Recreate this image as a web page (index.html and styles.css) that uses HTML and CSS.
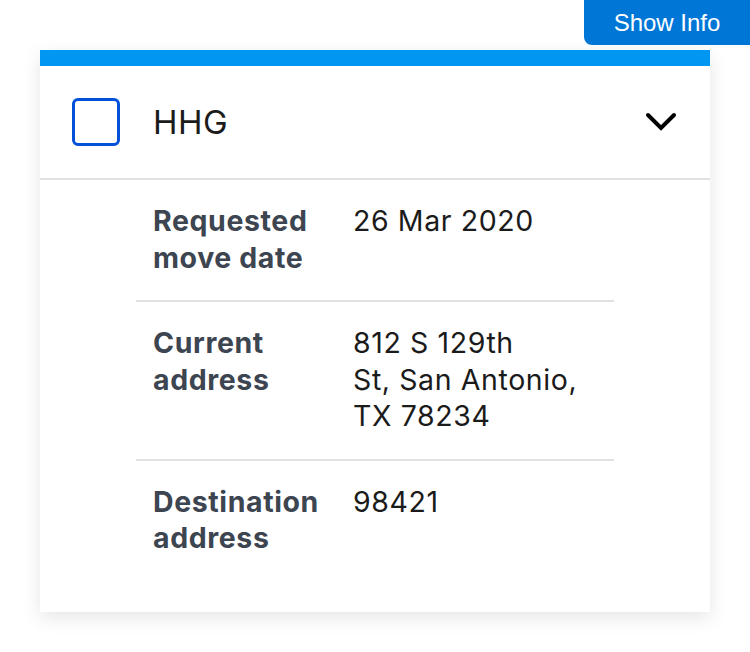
FILE: index.html
```html
<!DOCTYPE html>
<html lang="en">
<head>
<meta charset="utf-8">
<title>HHG</title>
<link rel="stylesheet" href="styles.css">
</head>
<body>
<button class="show-info" type="button">Show Info</button>
<main class="page">
  <section class="card">
    <div class="card-top"></div>
    <header class="card-header">
      <span class="checkbox" aria-hidden="true"></span>
      <h2 class="card-title">HHG</h2>
      <svg class="chevron" viewBox="0 0 32 20" width="32" height="20" aria-hidden="true">
        <path d="M3 3 L16 16 L29 3" fill="none" stroke="#000" stroke-width="4" stroke-linecap="round" stroke-linejoin="miter"/>
      </svg>
    </header>
    <dl class="details">
      <div class="row">
        <dt class="label">Requested move date</dt>
        <dd class="value">26 Mar 2020</dd>
      </div>
      <div class="row">
        <dt class="label">Current address</dt>
        <dd class="value"><span class="nb">812 S 129th</span> <span class="nb">St, San Antonio,</span> <span class="nb">TX 78234</span></dd>
      </div>
      <div class="row">
        <dt class="label">Destination address</dt>
        <dd class="value">98421</dd>
      </div>
    </dl>
  </section>
</main>
</body>
</html>
```

FILE: styles.css
```css
html, body {
  margin: 0;
  padding: 0;
  background: #fff;
}

body {
  font-family: Inter, "Noto Sans", sans-serif;
  color: #1b1b1b;
}

.show-info {
  position: fixed;
  top: 0;
  right: 0;
  width: 166px;
  height: 45px;
  border: 0;
  border-radius: 0 0 0 8px;
  background: #0076d6;
  color: #fff;
  font-family: "Liberation Sans", Arial, sans-serif;
  font-size: 24px;
  padding: 0;
  cursor: pointer;
}

.page {
  padding: 50px 40px 40px;
}

.card {
  background: #fff;
  box-shadow: 0 6px 18px rgba(0, 0, 0, 0.10);
  padding-bottom: 31px;
}

.card-top {
  height: 16px;
  background: #0096f2;
}

.card-header {
  display: flex;
  align-items: center;
  height: 112px;
  padding: 0 33px 0 32px;
  border-bottom: 2px solid #dfe1e2;
}

.checkbox {
  width: 48px;
  height: 48px;
  box-sizing: border-box;
  border: 3px solid #0050d8;
  border-radius: 6px;
  flex: none;
}

.card-title {
  flex: 1;
  margin: 0 0 0 33px;
  font-size: 33px;
  font-weight: 400;
  letter-spacing: 0.5px;
}

.chevron {
  flex: none;
}

.details {
  margin: 0;
  padding: 0 96px;
}

.row {
  display: flex;
  padding: 23px 17px 24px;
  font-size: 28.5px;
  line-height: 36.5px;
}

.row + .row {
  border-top: 2px solid #dfe1e2;
}

.label {
  width: 200px;
  flex: none;
  margin: 0;
  font-weight: 700;
  color: #3d4551;
  letter-spacing: 0.6px;
  padding-right: 20px;
  box-sizing: border-box;
}

.value {
  margin: 0;
  width: 244px;
  letter-spacing: 0.6px;
}

.nb {
  white-space: nowrap;
}
```
